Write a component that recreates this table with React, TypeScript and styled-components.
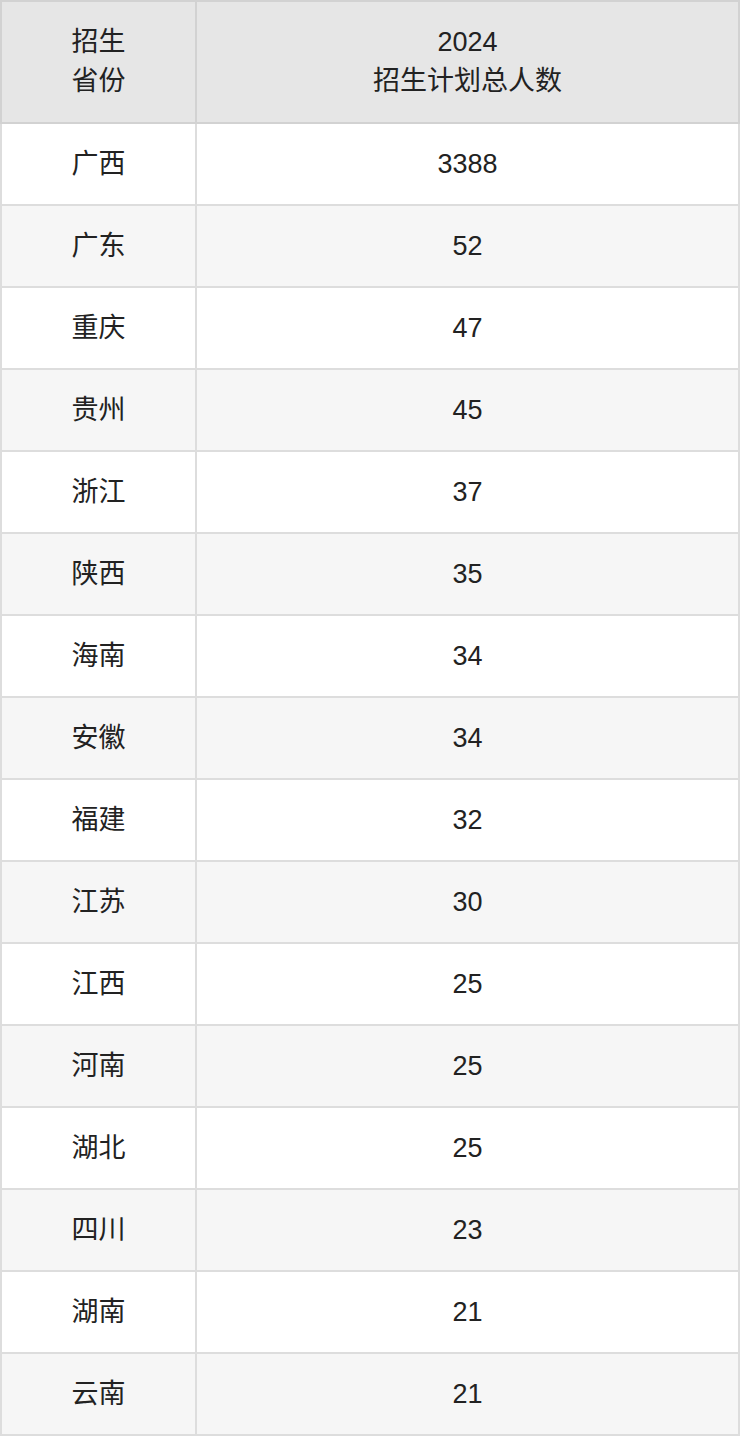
import styled, { createGlobalStyle } from "styled-components"

const rows: [string, number][] = [
  ["广西", 3388],
  ["广东", 52],
  ["重庆", 47],
  ["贵州", 45],
  ["浙江", 37],
  ["陕西", 35],
  ["海南", 34],
  ["安徽", 34],
  ["福建", 32],
  ["江苏", 30],
  ["江西", 25],
  ["河南", 25],
  ["湖北", 25],
  ["四川", 23],
  ["湖南", 21],
  ["云南", 21],
]

const App = () => {
  return (
    <>
      <GlobalStyle />
      <PlanTable>
        <colgroup>
          <col style={{ width: 195 }} />
          <col />
        </colgroup>
        <thead>
          <tr>
            <HeadCell>招生<br />省份</HeadCell>
            <HeadCell>2024<br />招生计划总人数</HeadCell>
          </tr>
        </thead>
        <tbody>
          {rows.map(([province, total], i) => (
            <Row key={province} $striped={i % 2 === 1}>
              <Cell>{province}</Cell>
              <Cell>{total}</Cell>
            </Row>
          ))}
        </tbody>
      </PlanTable>
    </>
  )
}

export default App

const GlobalStyle = createGlobalStyle`
  body {
    margin: 0;
    background: #ffffff;
    font-family: "Liberation Sans", "Noto Sans CJK SC", sans-serif;
    color: #222222;
  }
`

const PlanTable = styled.table`
  width: 740px;
  table-layout: fixed;
  border-collapse: collapse;
  font-size: 27px;
  line-height: 39px;
  text-align: center;
`

const HeadCell = styled.th`
  height: 120px;
  padding: 0;
  font-weight: normal;
  background: #e6e6e6;
  border: 2px solid #d2d2d2;
`

const Row = styled.tr<{ $striped: boolean }>`
  background: ${p => (p.$striped ? "#f6f6f6" : "#ffffff")};
`

const Cell = styled.td`
  height: 80px;
  padding: 0;
  border: 2px solid #dddddd;
`
